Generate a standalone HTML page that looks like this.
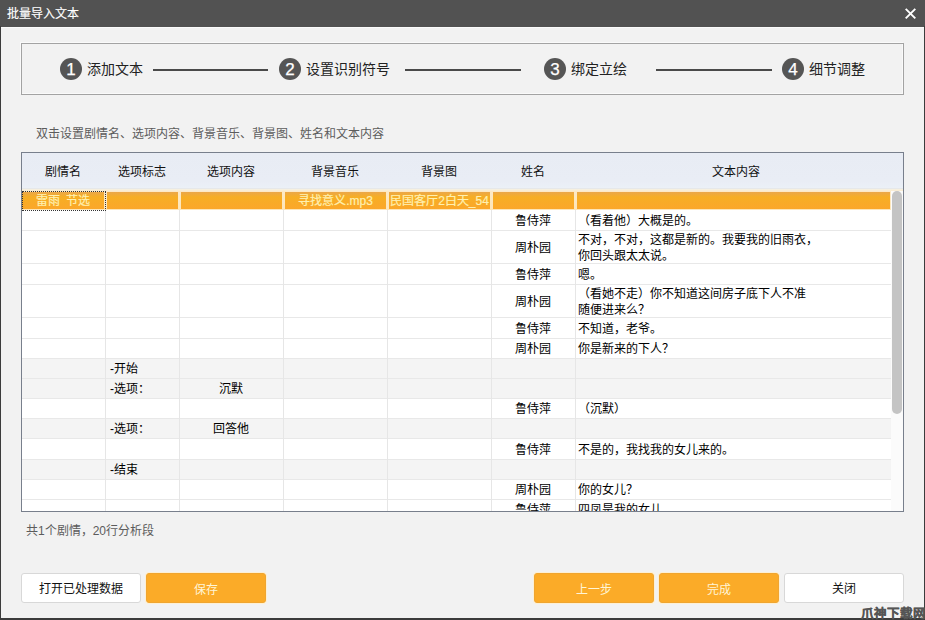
<!DOCTYPE html><html lang="zh-CN"><head><meta charset="utf-8"><style>
*{margin:0;padding:0;box-sizing:border-box}
html,body{text-spacing-trim:space-all;width:925px;height:620px;overflow:hidden;background:#f2f2f2;font-family:"Liberation Sans",sans-serif;}
.a{position:absolute}
.t{white-space:nowrap}
</style></head><body>

<div class="a" style="left:0;top:0;width:925px;height:27px;background:#525252"></div>
<div class="a" style="left:1px;top:27px;width:923px;height:1px;background:#fbfbfb"></div>
<div class="a t" style="left:7px;top:6px;font-size:12px;line-height:16px;color:#fff;-webkit-text-stroke:0.15px #fff">批量导入文本</div>
<svg class="a" style="left:903px;top:6px" width="15" height="15" viewBox="0 0 15 15"><path d="M2.7 2.8L12.3 12.4M12.3 2.8L2.7 12.4" stroke="#fff" stroke-width="1.9"/></svg>
<div class="a" style="left:0;top:26px;width:1px;height:594px;background:#3c3c3c"></div>
<div class="a" style="left:924px;top:26px;width:1px;height:594px;background:#3c3c3c"></div>
<div class="a" style="left:0;top:618px;width:925px;height:2px;background:#3c3c3c"></div>
<div class="a" style="left:21px;top:43px;width:883px;height:52px;border:1px solid #a3a3a3;box-shadow:-1px -1px 0 #fafafa, inset -1px -1px 0 #fafafa"></div>
<div class="a" style="left:60px;top:58px;width:22px;height:22px;border-radius:50%;background:#555;color:#fff;font-size:17px;line-height:23px;-webkit-text-stroke:0.25px #fff;text-align:center">1</div>
<div class="a t" style="left:87px;top:60px;font-size:14px;line-height:18px;color:#222">添加文本</div>
<div class="a" style="left:279px;top:58px;width:22px;height:22px;border-radius:50%;background:#555;color:#fff;font-size:17px;line-height:23px;-webkit-text-stroke:0.25px #fff;text-align:center">2</div>
<div class="a t" style="left:306px;top:60px;font-size:14px;line-height:18px;color:#222">设置识别符号</div>
<div class="a" style="left:544px;top:58px;width:22px;height:22px;border-radius:50%;background:#555;color:#fff;font-size:17px;line-height:23px;-webkit-text-stroke:0.25px #fff;text-align:center">3</div>
<div class="a t" style="left:571px;top:60px;font-size:14px;line-height:18px;color:#222">绑定立绘</div>
<div class="a" style="left:782px;top:58px;width:22px;height:22px;border-radius:50%;background:#555;color:#fff;font-size:17px;line-height:23px;-webkit-text-stroke:0.25px #fff;text-align:center">4</div>
<div class="a t" style="left:809px;top:60px;font-size:14px;line-height:18px;color:#222">细节调整</div>
<div class="a" style="left:153px;top:69px;width:115px;height:2px;background:#4a4a4a"></div>
<div class="a" style="left:405px;top:69px;width:116px;height:2px;background:#4a4a4a"></div>
<div class="a" style="left:656px;top:69px;width:116px;height:2px;background:#4a4a4a"></div>
<div class="a t" style="left:36px;top:126px;font-size:12px;line-height:16px;color:#5c5c5c">双击设置剧情名、选项内容、背景音乐、背景图、姓名和文本内容</div>
<div class="a" style="left:21px;top:152px;width:883px;height:360px;border:1px solid #787f8c;background:#fff;overflow:hidden">
<div class="a" style="left:0px;top:0px;width:881px;height:35px;background:linear-gradient(#e8ecf4,#e9edf5 80%,#ebf0f7)"></div>
<div class="a" style="left:0px;top:35px;width:881px;height:1px;background:#e6e8ea"></div>
<div class="a" style="left:0px;top:36px;width:881px;height:3px;background:linear-gradient(#f5f1e4,#fde9c6)"></div>
<div class="a" style="left:-1px;top:10px;width:84px;height:18px;font-size:12px;line-height:18px;color:#111;text-align:center;white-space:nowrap">剧情名</div>
<div class="a" style="left:83px;top:10px;width:74px;height:18px;font-size:12px;line-height:18px;color:#111;text-align:center;white-space:nowrap">选项标志</div>
<div class="a" style="left:157px;top:10px;width:104px;height:18px;font-size:12px;line-height:18px;color:#111;text-align:center;white-space:nowrap">选项内容</div>
<div class="a" style="left:261px;top:10px;width:104px;height:18px;font-size:12px;line-height:18px;color:#111;text-align:center;white-space:nowrap">背景音乐</div>
<div class="a" style="left:365px;top:10px;width:104px;height:18px;font-size:12px;line-height:18px;color:#111;text-align:center;white-space:nowrap">背景图</div>
<div class="a" style="left:469px;top:10px;width:84px;height:18px;font-size:12px;line-height:18px;color:#111;text-align:center;white-space:nowrap">姓名</div>
<div class="a" style="left:553px;top:10px;width:322px;height:18px;font-size:12px;line-height:18px;color:#111;text-align:center;white-space:nowrap">文本内容</div>
<div class="a" style="left:0px;top:57px;width:870px;height:20px;background:#fff"></div>
<div class="a" style="left:0px;top:77px;width:870px;height:33px;background:#fff"></div>
<div class="a" style="left:0px;top:110px;width:870px;height:21px;background:#fff"></div>
<div class="a" style="left:0px;top:131px;width:870px;height:33px;background:#fff"></div>
<div class="a" style="left:0px;top:164px;width:870px;height:21px;background:#fff"></div>
<div class="a" style="left:0px;top:185px;width:870px;height:20px;background:#fff"></div>
<div class="a" style="left:0px;top:205px;width:870px;height:20px;background:#f4f4f4"></div>
<div class="a" style="left:0px;top:225px;width:870px;height:20px;background:#f4f4f4"></div>
<div class="a" style="left:0px;top:245px;width:870px;height:20px;background:#fff"></div>
<div class="a" style="left:0px;top:265px;width:870px;height:20px;background:#f4f4f4"></div>
<div class="a" style="left:0px;top:285px;width:870px;height:21px;background:#fff"></div>
<div class="a" style="left:0px;top:306px;width:870px;height:20px;background:#f4f4f4"></div>
<div class="a" style="left:0px;top:326px;width:870px;height:20px;background:#fff"></div>
<div class="a" style="left:0px;top:346px;width:870px;height:20px;background:#fff"></div>
<div class="a" style="left:0px;top:77px;width:870px;height:1px;background:#e8e8e8"></div>
<div class="a" style="left:0px;top:110px;width:870px;height:1px;background:#e8e8e8"></div>
<div class="a" style="left:0px;top:131px;width:870px;height:1px;background:#e8e8e8"></div>
<div class="a" style="left:0px;top:164px;width:870px;height:1px;background:#e8e8e8"></div>
<div class="a" style="left:0px;top:185px;width:870px;height:1px;background:#e8e8e8"></div>
<div class="a" style="left:0px;top:205px;width:870px;height:1px;background:#e8e8e8"></div>
<div class="a" style="left:0px;top:225px;width:870px;height:1px;background:#e8e8e8"></div>
<div class="a" style="left:0px;top:245px;width:870px;height:1px;background:#e8e8e8"></div>
<div class="a" style="left:0px;top:265px;width:870px;height:1px;background:#e8e8e8"></div>
<div class="a" style="left:0px;top:285px;width:870px;height:1px;background:#e8e8e8"></div>
<div class="a" style="left:0px;top:306px;width:870px;height:1px;background:#e8e8e8"></div>
<div class="a" style="left:0px;top:326px;width:870px;height:1px;background:#e8e8e8"></div>
<div class="a" style="left:0px;top:346px;width:870px;height:1px;background:#e8e8e8"></div>
<div class="a" style="left:0px;top:366px;width:870px;height:1px;background:#e8e8e8"></div>
<div class="a" style="left:83px;top:38px;width:1px;height:330px;background:#e6e6e6"></div>
<div class="a" style="left:157px;top:38px;width:1px;height:330px;background:#e6e6e6"></div>
<div class="a" style="left:261px;top:38px;width:1px;height:330px;background:#e6e6e6"></div>
<div class="a" style="left:365px;top:38px;width:1px;height:330px;background:#e6e6e6"></div>
<div class="a" style="left:469px;top:38px;width:1px;height:330px;background:#e6e6e6"></div>
<div class="a" style="left:553px;top:38px;width:1px;height:330px;background:#e6e6e6"></div>
<div class="a" style="left:469px;top:58px;width:84px;height:20px;display:flex;align-items:center;justify-content:center;font-size:12px;line-height:16px;color:#000;white-space:nowrap">鲁侍萍</div>
<div class="a" style="left:556px;top:58px;width:313px;height:20px;display:flex;align-items:center;font-size:12px;line-height:16px;color:#000;white-space:nowrap">（看着他）大概是的。</div>
<div class="a" style="left:469px;top:78px;width:84px;height:33px;display:flex;align-items:center;justify-content:center;font-size:12px;line-height:16px;color:#000;white-space:nowrap">周朴园</div>
<div class="a" style="left:556px;top:78px;width:313px;height:33px;display:flex;align-items:center;font-size:12px;line-height:16px;color:#000;white-space:nowrap">不对，不对，这都是新的。我要我的旧雨衣，<br>你回头跟太太说。</div>
<div class="a" style="left:469px;top:111px;width:84px;height:21px;display:flex;align-items:center;justify-content:center;font-size:12px;line-height:16px;color:#000;white-space:nowrap">鲁侍萍</div>
<div class="a" style="left:556px;top:111px;width:313px;height:21px;display:flex;align-items:center;font-size:12px;line-height:16px;color:#000;white-space:nowrap">嗯。</div>
<div class="a" style="left:469px;top:132px;width:84px;height:33px;display:flex;align-items:center;justify-content:center;font-size:12px;line-height:16px;color:#000;white-space:nowrap">周朴园</div>
<div class="a" style="left:556px;top:132px;width:313px;height:33px;display:flex;align-items:center;font-size:12px;line-height:16px;color:#000;white-space:nowrap">（看她不走）你不知道这间房子底下人不准<br>随便进来么？</div>
<div class="a" style="left:469px;top:165px;width:84px;height:21px;display:flex;align-items:center;justify-content:center;font-size:12px;line-height:16px;color:#000;white-space:nowrap">鲁侍萍</div>
<div class="a" style="left:556px;top:165px;width:313px;height:21px;display:flex;align-items:center;font-size:12px;line-height:16px;color:#000;white-space:nowrap">不知道，老爷。</div>
<div class="a" style="left:469px;top:186px;width:84px;height:20px;display:flex;align-items:center;justify-content:center;font-size:12px;line-height:16px;color:#000;white-space:nowrap">周朴园</div>
<div class="a" style="left:556px;top:186px;width:313px;height:20px;display:flex;align-items:center;font-size:12px;line-height:16px;color:#000;white-space:nowrap">你是新来的下人？</div>
<div class="a" style="left:88px;top:206px;width:69px;height:20px;display:flex;align-items:center;font-size:12px;line-height:16px;color:#000;white-space:nowrap">-开始</div>
<div class="a" style="left:88px;top:226px;width:69px;height:20px;display:flex;align-items:center;font-size:12px;line-height:16px;color:#000;white-space:nowrap">-选项：</div>
<div class="a" style="left:157px;top:226px;width:104px;height:20px;display:flex;align-items:center;justify-content:center;font-size:12px;line-height:16px;color:#000;white-space:nowrap">沉默</div>
<div class="a" style="left:469px;top:246px;width:84px;height:20px;display:flex;align-items:center;justify-content:center;font-size:12px;line-height:16px;color:#000;white-space:nowrap">鲁侍萍</div>
<div class="a" style="left:556px;top:246px;width:313px;height:20px;display:flex;align-items:center;font-size:12px;line-height:16px;color:#000;white-space:nowrap">（沉默）</div>
<div class="a" style="left:88px;top:266px;width:69px;height:20px;display:flex;align-items:center;font-size:12px;line-height:16px;color:#000;white-space:nowrap">-选项：</div>
<div class="a" style="left:157px;top:266px;width:104px;height:20px;display:flex;align-items:center;justify-content:center;font-size:12px;line-height:16px;color:#000;white-space:nowrap">回答他</div>
<div class="a" style="left:469px;top:286px;width:84px;height:21px;display:flex;align-items:center;justify-content:center;font-size:12px;line-height:16px;color:#000;white-space:nowrap">鲁侍萍</div>
<div class="a" style="left:556px;top:286px;width:313px;height:21px;display:flex;align-items:center;font-size:12px;line-height:16px;color:#000;white-space:nowrap">不是的，我找我的女儿来的。</div>
<div class="a" style="left:88px;top:307px;width:69px;height:20px;display:flex;align-items:center;font-size:12px;line-height:16px;color:#000;white-space:nowrap">-结束</div>
<div class="a" style="left:469px;top:327px;width:84px;height:20px;display:flex;align-items:center;justify-content:center;font-size:12px;line-height:16px;color:#000;white-space:nowrap">周朴园</div>
<div class="a" style="left:556px;top:327px;width:313px;height:20px;display:flex;align-items:center;font-size:12px;line-height:16px;color:#000;white-space:nowrap">你的女儿？</div>
<div class="a" style="left:469px;top:347px;width:84px;height:20px;display:flex;align-items:center;justify-content:center;font-size:12px;line-height:16px;color:#000;white-space:nowrap">鲁侍萍</div>
<div class="a" style="left:556px;top:347px;width:313px;height:20px;display:flex;align-items:center;font-size:12px;line-height:16px;color:#000;white-space:nowrap">四凤是我的女儿。</div>
<div class="a" style="left:0px;top:38px;width:870px;height:19px;background:linear-gradient(#fde9c6,#fde6b8)"></div>
<div class="a" style="left:0px;top:39px;width:82px;height:17px;background:linear-gradient(#eaa74a,#f7ae24 30%,#fba72a);color:#fff0b0;font-size:12px;line-height:19px;-webkit-text-stroke:0.2px #fff0b0;text-align:center;white-space:nowrap;overflow:hidden">雷雨&nbsp;&nbsp;节选</div>
<div class="a" style="left:85px;top:39px;width:71px;height:17px;background:linear-gradient(#eaa74a,#f7ae24 30%,#fba72a);color:#fff0b0;font-size:12px;line-height:19px;-webkit-text-stroke:0.2px #fff0b0;text-align:center;white-space:nowrap;overflow:hidden"></div>
<div class="a" style="left:159px;top:39px;width:101px;height:17px;background:linear-gradient(#eaa74a,#f7ae24 30%,#fba72a);color:#fff0b0;font-size:12px;line-height:19px;-webkit-text-stroke:0.2px #fff0b0;text-align:center;white-space:nowrap;overflow:hidden"></div>
<div class="a" style="left:263px;top:39px;width:101px;height:17px;background:linear-gradient(#eaa74a,#f7ae24 30%,#fba72a);color:#fff0b0;font-size:12px;line-height:19px;-webkit-text-stroke:0.2px #fff0b0;text-align:center;white-space:nowrap;overflow:hidden">寻找意义.mp3</div>
<div class="a" style="left:367px;top:39px;width:101px;height:17px;background:linear-gradient(#eaa74a,#f7ae24 30%,#fba72a);color:#fff0b0;font-size:12px;line-height:19px;-webkit-text-stroke:0.2px #fff0b0;text-align:center;white-space:nowrap;overflow:hidden">民国客厅2白天_54</div>
<div class="a" style="left:471px;top:39px;width:81px;height:17px;background:linear-gradient(#eaa74a,#f7ae24 30%,#fba72a);color:#fff0b0;font-size:12px;line-height:19px;-webkit-text-stroke:0.2px #fff0b0;text-align:center;white-space:nowrap;overflow:hidden"></div>
<div class="a" style="left:555px;top:39px;width:313px;height:17px;background:linear-gradient(#eaa74a,#f7ae24 30%,#fba72a);color:#fff0b0;font-size:12px;line-height:19px;-webkit-text-stroke:0.2px #fff0b0;text-align:center;white-space:nowrap;overflow:hidden"></div>
<div class="a" style="left:0px;top:38px;width:84px;height:20px;border:1px dotted #333"></div>
<div class="a" style="left:869px;top:38px;width:13px;height:320px;background:#fbfbfb"></div>
<div class="a" style="left:870px;top:38px;width:10px;height:223px;background:#c4c4c4;border-radius:5px"></div>
</div>
<div class="a t" style="left:26px;top:523px;font-size:12px;line-height:16px;color:#5c5c5c">共1个剧情，20行分析段</div>
<div class="a" style="left:21px;top:573px;width:120px;height:30px;border-radius:3px;background:#fff;border:1px solid #d8d8d8;color:#111;font-size:12px;line-height:30px;text-align:center">打开已处理数据</div>
<div class="a" style="left:146px;top:573px;width:120px;height:30px;border-radius:3px;background:#fbab28;border:1px solid #f0a530;box-shadow:0 0 0 1px #fdf0d4;color:#fff5d6;font-size:12px;line-height:32px;text-align:center">保存</div>
<div class="a" style="left:534px;top:573px;width:120px;height:30px;border-radius:3px;background:#fbab28;border:1px solid #f0a530;box-shadow:0 0 0 1px #fdf0d4;color:#fff5d6;font-size:12px;line-height:32px;text-align:center">上一步</div>
<div class="a" style="left:659px;top:573px;width:120px;height:30px;border-radius:3px;background:#fbab28;border:1px solid #f0a530;box-shadow:0 0 0 1px #fdf0d4;color:#fff5d6;font-size:12px;line-height:32px;text-align:center">完成</div>
<div class="a" style="left:784px;top:573px;width:120px;height:30px;border-radius:3px;background:#fff;border:1px solid #d8d8d8;color:#111;font-size:12px;line-height:30px;text-align:center">关闭</div>
<div class="a t" style="left:861px;top:606px;font-size:12.5px;line-height:16px;font-weight:900;color:#555;-webkit-text-stroke:0.3px #555;letter-spacing:0px">爪神下载网</div>
</body></html>
